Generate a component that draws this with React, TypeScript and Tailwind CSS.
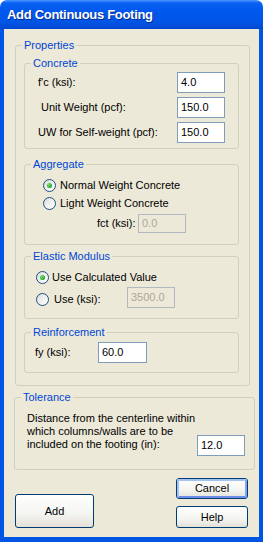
import { ReactNode } from 'react'

const GroupBox = ({ label, className, children }: { label: string; className: string; children: ReactNode }) => (
  <fieldset className={`border border-[#d0d0bf] rounded-[3px] p-0 ${className}`}>
    <legend className="ml-[6px] px-[2px] leading-[14px] text-[#0046d5]">{label}</legend>
    {children}
  </fieldset>
)

const TextBox = ({ value, disabled, className = '' }: { value: string; disabled?: boolean; className?: string }) => (
  <div
    className={`flex items-center px-[3px] border ${
      disabled ? 'bg-[#ece9d8] border-[#b1b8bf] text-[#aca899]' : 'bg-white border-[#7f9db9] text-black'
    } ${className}`}
  >
    {value}
  </div>
)

const Radio = ({ checked }: { checked?: boolean }) => (
  <span className="flex items-center justify-center w-[13px] h-[13px] rounded-full border border-[#1c5180] bg-[linear-gradient(135deg,#dcdcd7_0%,#f4f4f2_60%,#ffffff_100%)]">
    {checked && (
      <span className="w-[5px] h-[5px] rounded-full bg-[radial-gradient(circle_at_35%_35%,#7ce07a_0%,#2fb32c_55%,#1c8f19_100%)]" />
    )}
  </span>
)

const XpButton = ({ label, className, focused }: { label: string; className: string; focused?: boolean }) => (
  <div
    className={`rounded-[3px] border border-[#003c74] bg-[linear-gradient(to_bottom,#ffffff_0%,#f4f4f0_60%,#e3e1d8_100%)] ${className}`}
  >
    <div
      className={`flex h-full w-full items-center justify-center rounded-[2px] ${
        focused ? 'border-2 border-[#a5c3f1] border-b-[#6d8ee8] border-r-[#86a4ec]' : ''
      }`}
    >
      {label}
    </div>
  </div>
)

const App = () => {
  return (
    <div className="w-[263px] h-[542px] flex flex-col text-[11px] text-black [font-family:'Liberation_Sans',Arial,sans-serif] bg-white">
      {/* Title bar */}
      <div className="h-[29px] shrink-0 rounded-t-[7px] flex items-center pl-[7px] bg-[linear-gradient(to_bottom,#4b97ff_0%,#0a62f3_10%,#0058ee_35%,#0055e6_75%,#0047d0_100%)]">
        <span className="text-white font-bold text-[13px] tracking-[-0.3px] [text-shadow:1px_1px_0_#0a2d8c]">
          Add Continuous Footing
        </span>
      </div>

      {/* Body */}
      <div className="flex-1 flex flex-col bg-[#ece9d8] border-x-4 border-b-[5px] border-[#0055e5]">
        <GroupBox label="Properties" className="ml-[11px] mt-[9px] w-[235px]">
          <div className="pl-[8px] pt-[4px] pb-[12px]">
            <GroupBox label="Concrete" className="w-[215px]">
              <div className="flex flex-col gap-[4px] pt-[2px] pb-[5px] pl-[13px] pr-[13px]">
                <div className="flex h-[21px] items-center justify-between">
                  <span>f&apos;c (ksi):</span>
                  <TextBox value="4.0" className="w-[48px] h-[21px]" />
                </div>
                <div className="flex h-[21px] items-center justify-between">
                  <span className="ml-[3px]">Unit Weight (pcf):</span>
                  <TextBox value="150.0" className="w-[48px] h-[21px]" />
                </div>
                <div className="flex h-[21px] items-center justify-between">
                  <span>UW for Self-weight (pcf):</span>
                  <TextBox value="150.0" className="w-[48px] h-[21px]" />
                </div>
              </div>
            </GroupBox>

            <GroupBox label="Aggregate" className="w-[215px] mt-[8px]">
              <div className="flex flex-col pt-[5px] pb-[11px] pl-[18px]">
                <div className="flex h-[18px] items-center gap-[4px]">
                  <Radio checked />
                  <span>Normal Weight Concrete</span>
                </div>
                <div className="flex h-[18px] items-center gap-[4px]">
                  <Radio />
                  <span>Light Weight Concrete</span>
                </div>
                <div className="flex mt-[2px] items-center pl-[54px] gap-[10px]">
                  <span className="w-[31px] whitespace-nowrap">fct (ksi):</span>
                  <TextBox value="0.0" disabled className="w-[48px] h-[19px]" />
                </div>
              </div>
            </GroupBox>

            <GroupBox label="Elastic Modulus" className="w-[215px] mt-[4px]">
              <div className="flex flex-col pt-[5px] pb-[10px] pl-[11px]">
                <div className="flex h-[18px] items-center gap-[3px]">
                  <Radio checked />
                  <span>Use Calculated Value</span>
                </div>
                <div className="flex h-[21px] mt-[1px] items-center">
                  <div className="flex items-center gap-[5px] mt-[4px] w-[91px]">
                    <Radio />
                    <span>Use (ksi):</span>
                  </div>
                  <TextBox value="3500.0" disabled className="w-[48px] h-[21px]" />
                </div>
              </div>
            </GroupBox>

            <GroupBox label="Reinforcement" className="w-[215px] mt-[6px]">
              <div className="flex items-center pt-[3px] pb-[9px] pl-[10px]">
                <span className="w-[63px]">fy (ksi):</span>
                <TextBox value="60.0" className="w-[49px] h-[21px]" />
              </div>
            </GroupBox>
          </div>
        </GroupBox>

        <GroupBox label="Tolerance" className="ml-[10px] mt-[4px] w-[236px]">
          <div className="flex items-start justify-between pl-[12px] pr-[9px] pb-[13px]">
            <p className="mt-[8px] leading-[13px] w-[170px]">
              Distance from the centerline within which columns/walls are to be included on the footing (in):
            </p>
            <TextBox value="12.0" className="mt-[31px] w-[48px] h-[21px]" />
          </div>
        </GroupBox>

        <div className="flex items-end justify-between mt-[8px] ml-[11px] mr-[11px]">
          <XpButton label="Add" className="w-[79px] h-[34px]" />
          <div className="flex flex-col gap-[7px]">
            <XpButton label="Cancel" focused className="w-[72px] h-[21px]" />
            <XpButton label="Help" className="w-[72px] h-[22px]" />
          </div>
        </div>
      </div>
    </div>
  )
}

export default App
